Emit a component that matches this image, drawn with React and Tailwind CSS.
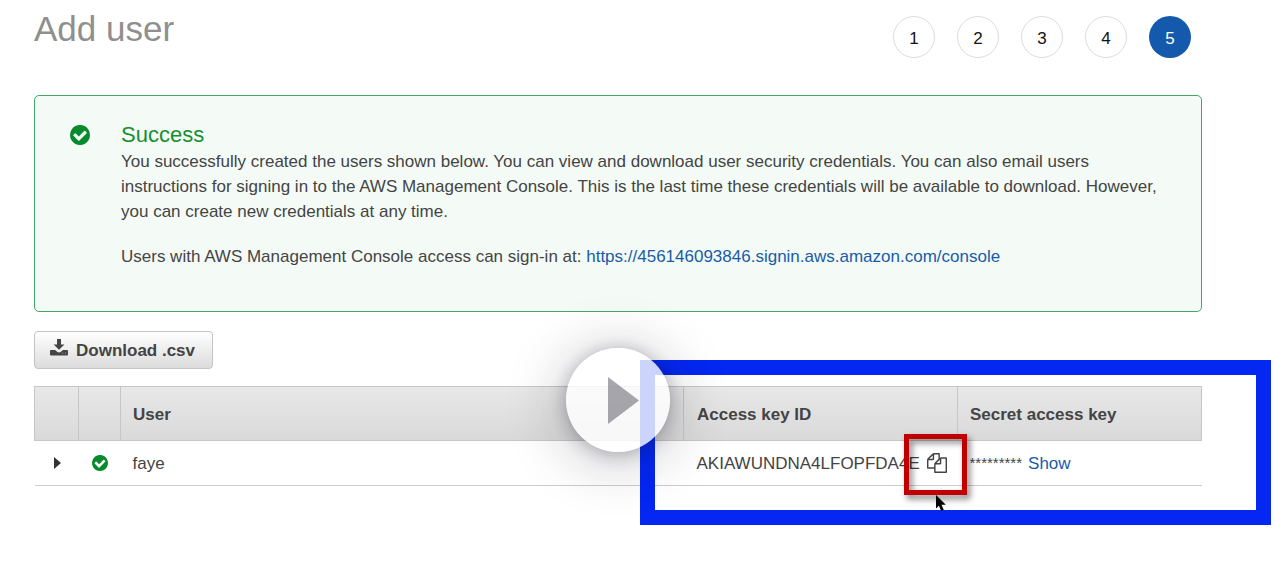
const steps = [1, 2, 3, 4, 5];
const currentStep = 5;

function CheckCircle({ className }) {
  return (
    <svg viewBox="128 128 1536 1536" className={className} fill="currentColor" aria-hidden="true">
      <path d="M1412 734q0-28-18-46l-91-90q-19-19-45-19t-45 19l-408 407-226-226q-19-19-45-19t-45 19l-91 90q-18 18-18 46 0 27 18 45l362 362q19 19 45 19 27 0 46-19l543-543q18-18 18-45zm252 162q0 209-103 385.5t-279.5 279.5-385.5 103-385.5-103-279.5-279.5-103-385.5 103-385.5 279.5-279.5 385.5-103 385.5 103 279.5 279.5 103 385.5z" />
    </svg>
  );
}

function DownloadIcon({ className }) {
  return (
    <svg viewBox="0 0 18 17" className={className} fill="currentColor" aria-hidden="true">
      <path d="M7 0h4v5.400h3.400L9 10.800 3.600 5.400H7z" />
      <path
        fillRule="evenodd"
        d="M.9 11h4.200l2 1.700q1.900 1.500 3.800 0l2-1.700h4.200q.9 0 .9.9v3.600q0 .9-.9.9H.9q-.9 0-.9-.9v-3.600Q0 11 .9 11zM12.400 13.800v.8h.8v-.8zm2.600 0v.8h.8v-.8z"
      />
    </svg>
  );
}

function CopyIcon({ className }) {
  return (
    <svg viewBox="0 0 1792 1792" className={className} fill="currentColor" aria-hidden="true">
      <path d="M1696 384q40 0 68 28t28 68v1216q0 40-28 68t-68 28h-960q-40 0-68-28t-28-68v-288h-544q-40 0-68-28t-28-68v-672q0-40 20-88t48-76l408-408q28-28 76-48t88-20h416q40 0 68 28t28 68v328q68-40 128-40h416zm-544 213l-299 299h299v-299zm-640-384l-299 299h299v-299zm196 647l316-316v-416h-384v416q0 40-28 68t-68 28h-416v640h512v-256q0-40 20-88t48-76zm956 804v-1152h-384v416q0 40-28 68t-68 28h-416v640h896z" />
    </svg>
  );
}

function Pointer({ className }) {
  return (
    <svg viewBox="0 0 12 18" className={className} aria-hidden="true">
      <path d="M1 1v13.500l2.900-2.700L6.200 17l2.600-1.100L6.500 10.800H10.800z" fill="#000" />
    </svg>
  );
}

export default function App() {
  return (
    <main className="overflow-x-clip bg-white pb-21 pl-[34px] pr-[86px] pt-3 font-['Liberation_Sans',Arial,sans-serif] text-[17px] leading-[25px] text-[#444]">
      <header className="flex items-start justify-between pr-[11px]">
        <h1 className="text-[35px] leading-[34px] text-[#8f8f8f]">Add user</h1>
        <ol className="mt-1 flex gap-[22px]">
          {steps.map((step) => (
            <li
              key={step}
              aria-current={step === currentStep ? "step" : undefined}
              className={
                step === currentStep
                  ? "flex size-[42px] items-center justify-center rounded-full bg-[#1459ab] pt-0.5 text-white"
                  : "flex size-[42px] items-center justify-center rounded-full border border-[#ddd] pt-0.5 text-[#111]"
              }
            >
              {step}
            </li>
          ))}
        </ol>
      </header>

      <section className="mt-[37px] flex h-[217px] items-start rounded-[5px] border border-[#43a766] bg-[#f4fbf7] pl-[35px] pr-6 pt-[25px]">
        <CheckCircle className="mt-1 size-5 shrink-0 text-[#078a2c]" />
        <div className="ml-[31px]">
          <h2 className="text-[22px] leading-[28px] text-[#15902f]">Success</h2>
          <p>
            You successfully created the users shown below. You can view and download user security credentials. You can
            also email users instructions for signing in to the AWS Management Console. This is the last time these
            credentials will be available to download. However, you can create new credentials at any time.
          </p>
          <p className="mt-5">
            Users with AWS Management Console access can sign-in at:{" "}
            <a href="https://456146093846.signin.aws.amazon.com/console" className="text-[#1a5ba8]">
              https://456146093846.signin.aws.amazon.com/console
            </a>
          </p>
        </div>
      </section>

      <button
        type="button"
        className="mt-[19px] flex h-[38px] items-center gap-2 rounded-[4px] border border-[#c4c4c4] bg-linear-to-b from-white to-[#dcdcdc] pl-[15px] pr-[17px] font-bold"
      >
        <DownloadIcon className="mb-1.5 h-[17px] w-[18px]" />
        Download .csv
      </button>

      <div className="relative mt-[17px]">
        <table className="w-full table-fixed border-collapse text-left">
          <colgroup>
            <col className="w-[44px]" />
            <col className="w-[42px]" />
            <col />
            <col className="w-[274px]" />
            <col className="w-[244px]" />
          </colgroup>
          <thead>
            <tr className="h-[54px] bg-linear-to-b from-[#e8e8e8] to-[#d9d9d9]">
              <th className="border border-[#c6c6c6]" aria-label="Expand" />
              <th className="border border-[#c6c6c6]" aria-label="Status" />
              <th className="border border-[#c6c6c6] px-3 pt-0.5">User</th>
              <th className="border border-[#c6c6c6] px-[13px] pt-0.5">Access key ID</th>
              <th className="border border-[#c6c6c6] px-3 pt-0.5">Secret access key</th>
            </tr>
          </thead>
          <tbody>
            <tr className="h-[45px] border-b border-[#ccc]">
              <td>
                <button type="button" aria-label="Expand faye" className="ml-[19px] block">
                  <svg viewBox="0 0 7 12" className="h-3 w-[7px]" fill="#333" aria-hidden="true">
                    <path d="M0 0l7 6-7 6z" />
                  </svg>
                </button>
              </td>
              <td>
                <CheckCircle className="ml-[13px] size-4 text-[#078a2c]" />
              </td>
              <td className="px-3">faye</td>
              <td className="pl-[13px]">
                <div className="flex items-center gap-[7px] whitespace-nowrap">
                  <span>AKIAWUNDNA4LFOPFDA4E</span>
                  <span className="relative flex">
                    <button type="button" aria-label="Copy access key ID">
                      <CopyIcon className="size-5" />
                    </button>
                    <span className="absolute -left-[23px] -top-[19px] z-10 h-[61px] w-[63px] border-[5px] border-[#c00000] drop-shadow-[3px_4px_3px_rgba(0,0,0,0.5)]" />
                    <Pointer className="absolute left-2 top-[41px] z-10 h-[18px] w-3" />
                  </span>
                </div>
              </td>
              <td className="px-3">
                <div className="flex gap-1.5">
                  <span className="text-[15px] leading-[23px]">*********</span>
                  <button type="button" className="text-[#1a5ba8]">
                    Show
                  </button>
                </div>
              </td>
            </tr>
          </tbody>
        </table>

        <div className="pointer-events-none absolute -right-[69px] -top-[26px] h-[165px] w-[631px] border-[15px] border-[#0427f2]" />

        <button
          type="button"
          aria-label="Play video"
          className="absolute left-1/2 -top-[38px] flex size-[104px] -translate-x-1/2 items-center justify-center rounded-full bg-white/80 shadow-[0_6px_60px_rgba(20,20,40,0.3),0_2px_16px_rgba(20,20,40,0.25)]"
        >
          <svg viewBox="0 0 31 47" className="ml-2.5 h-[47px] w-[31px]" fill="#50505c" fillOpacity=".5" aria-hidden="true">
            <path d="M0 0l31 23.500L0 47z" />
          </svg>
        </button>
      </div>
    </main>
  );
}
